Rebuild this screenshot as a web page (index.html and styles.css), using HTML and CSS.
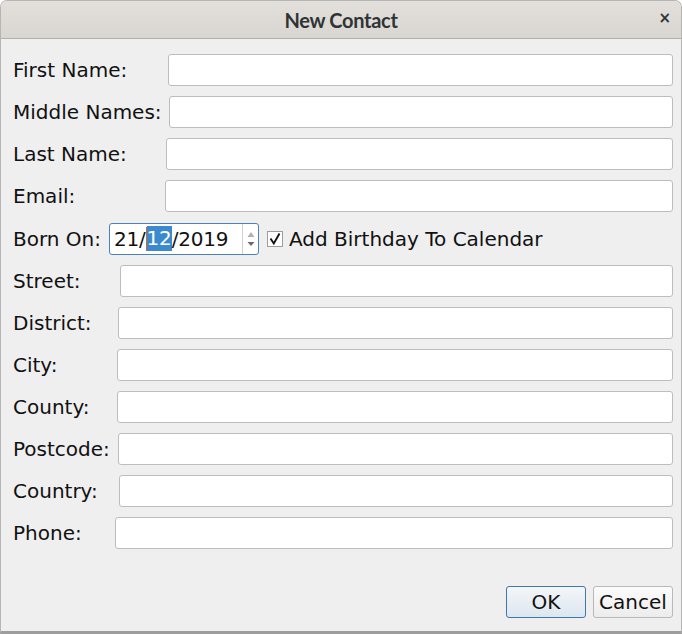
FILE: index.html
```html
<!DOCTYPE html>
<html>
<head>
<meta charset="utf-8">
<link rel="stylesheet" href="styles.css">
</head>
<body>
<div class="window">
  <div class="titlebar">
    <span class="title">New Contact</span>
    <span class="close">×</span>
  </div>
  <div class="form">
    <div class="row"><label class="lbl l155">First Name:</label><div class="field"></div></div>
    <div class="row"><label class="lbl l156">Middle Names:</label><div class="field"></div></div>
    <div class="row"><label class="lbl l153">Last Name:</label><div class="field"></div></div>
    <div class="row"><label class="lbl l152">Email:</label><div class="field"></div></div>
    <div class="row born"><label class="lbl l96">Born On:</label>
      <div class="spinner">
        <div class="spin-text">21/<span class="caret"></span><span class="sel">12</span>/2019</div>
        <div class="spin-btns">
          <svg width="10" height="26" viewBox="0 0 10 26"><path d="M1.5 11 L5 6 L8.5 11 Z" fill="#b0b0b0"/><path d="M1.5 16 L5 20 L8.5 16 Z" fill="#6a6a6a"/></svg>
        </div>
      </div>
      <div class="check">
        <span class="box"><svg width="14" height="14" viewBox="0 0 14 14"><path d="M2.5 6.5 L5.8 11.5 L11.5 1.5" fill="none" stroke="#111" stroke-width="1.9"/></svg></span>
        <span class="check-label">Add Birthday To Calendar</span>
      </div>
    </div>
    <div class="row"><label class="lbl l107">Street:</label><div class="field"></div></div>
    <div class="row"><label class="lbl l105">District:</label><div class="field"></div></div>
    <div class="row"><label class="lbl l104">City:</label><div class="field"></div></div>
    <div class="row"><label class="lbl l104">County:</label><div class="field"></div></div>
    <div class="row"><label class="lbl l105">Postcode:</label><div class="field"></div></div>
    <div class="row"><label class="lbl l106">Country:</label><div class="field"></div></div>
    <div class="row"><label class="lbl l102">Phone:</label><div class="field"></div></div>
  </div>
  <div class="buttons">
    <button class="btn ok">OK</button>
    <button class="btn cancel">Cancel</button>
  </div>
</div>
</body>
</html>
```
FILE: styles.css
```css
html, body {
  margin: 0;
  padding: 0;
  background: #ffffff;
}
body {
  width: 682px;
  height: 634px;
  overflow: hidden;
  font-family: "DejaVu Sans", sans-serif;
}
.window {
  width: 682px;
  height: 634px;
  box-sizing: border-box;
  background: #efefef;
  border: 1px solid #b5b5b5;
  border-bottom: 3px solid #9d9d9d;
  border-radius: 7px 7px 0 0;
  display: flex;
  flex-direction: column;
  overflow: hidden;
}
.titlebar {
  height: 37px;
  flex: none;
  background: linear-gradient(#e3e0dc, #d9d5d0);
  border-bottom: 1px solid #b3afa9;
  display: flex;
  align-items: center;
  justify-content: center;
  position: relative;
}
.title {
  font-family: "Lato", sans-serif;
  font-weight: 700;
  font-size: 20px;
  color: #2e3436;
  letter-spacing: -0.3px;
}
.close {
  position: absolute;
  right: 10px;
  top: 8px;
  font-size: 15px;
  font-weight: 700;
  color: #2e3436;
}
.form {
  padding: 15px 8px 0 12px;
  display: flex;
  flex-direction: column;
  gap: 10px;
}
.row {
  display: flex;
  align-items: center;
  height: 32px;
}
.row.born {
  height: 33px;
}
.lbl {
  flex: none;
  font-size: 20px;
  color: #111;
}
.l155 { width: 155px; }
.l156 { width: 156px; }
.l153 { width: 153px; }
.l152 { width: 152px; }
.l96 { width: 96px; }
.l107 { width: 107px; }
.l105 { width: 105px; }
.l104 { width: 104px; }
.l106 { width: 106px; }
.l102 { width: 102px; }
.field {
  flex: 1;
  height: 32px;
  box-sizing: border-box;
  background: #fff;
  border: 1px solid #bdbdbd;
  border-radius: 3px;
}
.spinner {
  width: 150px;
  height: 32px;
  box-sizing: border-box;
  background: #fff;
  border: 1px solid #4a82bd;
  border-radius: 3px;
  display: flex;
  align-items: center;
}
.spin-text {
  flex: 1;
  font-size: 20px;
  padding-left: 4px;
  color: #111;
  display: flex;
  align-items: center;
  letter-spacing: -0.2px;
}
.caret {
  width: 1px;
  height: 24px;
  background: #d06a2a;
}
.sel {
  background: #3b8ad0;
  color: #fff;
  line-height: 25px;
}
.spin-btns {
  width: 15px;
  height: 30px;
  border-left: 1px solid #d0d0d0;
  display: flex;
  align-items: center;
  justify-content: center;
}
.check {
  display: flex;
  align-items: center;
  margin-left: 8px;
  gap: 6px;
}
.box {
  width: 16px;
  height: 16px;
  box-sizing: border-box;
  background: #fff;
  border: 1px solid #9d9d9d;
  display: flex;
  align-items: center;
  justify-content: center;
}
.check-label {
  font-size: 20px;
  color: #111;
}
.buttons {
  margin-top: auto;
  margin-bottom: 13px;
  padding-right: 8px;
  display: flex;
  justify-content: flex-end;
  gap: 7px;
}
.btn {
  width: 80px;
  height: 32px;
  font-family: "DejaVu Sans", sans-serif;
  font-size: 20px;
  color: #111;
  border-radius: 3px;
  padding: 0;
}
.ok {
  background: linear-gradient(#f3f6f9, #dde6ef);
  border: 1px solid #3f78b0;
}
.cancel {
  background: linear-gradient(#fbfbfb, #ececec);
  border: 1px solid #b9b9b9;
}
```
